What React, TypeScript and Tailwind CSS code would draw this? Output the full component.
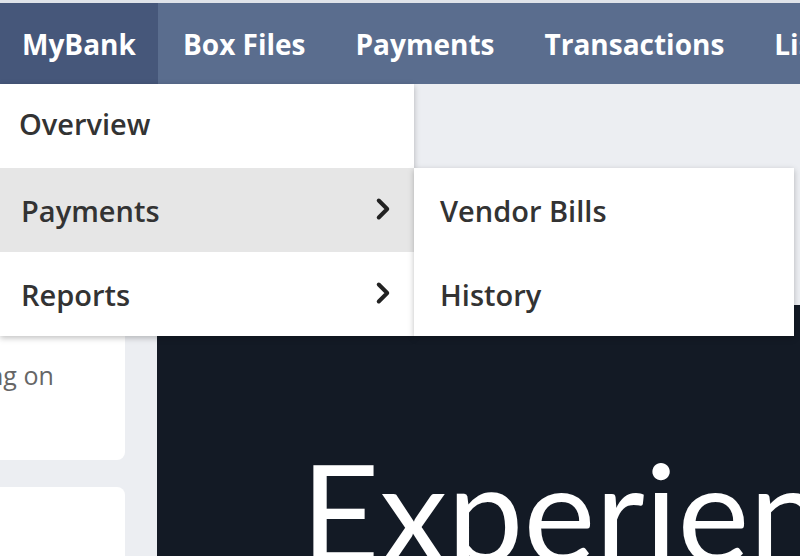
import { ChevronRight } from 'lucide-react';

const NAV_ITEMS = ['MyBank', 'Box Files', 'Payments', 'Transactions', 'Lists'];

interface MenuRowProps {
  label: string;
  active?: boolean;
  hasChildren?: boolean;
  indent?: string;
  raise?: boolean;
}

function MenuRow({ label, active, hasChildren, indent = 'pl-[21px]', raise }: MenuRowProps) {
  return (
    <div
      className={[
        'flex h-[84px] items-center justify-between pr-[14px] text-[29px] font-semibold text-[#333333]',
        indent,
        active ? 'bg-[#e6e6e6]' : 'bg-white',
      ].join(' ')}
    >
      <span className={raise ? '-mt-[4px]' : 'mt-[1px]'}>{label}</span>
      {hasChildren && (
        <ChevronRight className="-mt-[2px] h-[34px] w-[34px] text-[#222]" strokeWidth={2.8} />
      )}
    </div>
  );
}

export default function App() {
  return (
    <div
      className="relative h-[556px] w-[800px] overflow-hidden bg-[#eceef2]"
      style={{ fontFamily: '"Open Sans", "Liberation Sans", sans-serif' }}
    >
      <div className="h-[3px] bg-[#dfe3e9]" />
      <nav className="flex h-[81px] items-stretch overflow-hidden whitespace-nowrap bg-[#5a6d8e]">
        {NAV_ITEMS.map((item, i) => (
          <div
            key={item}
            className={[
              'flex shrink-0 items-center text-[28px] font-bold text-white',
              i === 0 ? 'w-[158px] bg-[#46577a] pl-[22px]' : 'px-[25px]',
            ].join(' ')}
          >
            <span className="mt-[1px]">{item}</span>
          </div>
        ))}
      </nav>

      {/* page body */}
      <div className="flex pt-[221px]">
        <div className="flex w-[125px] shrink-0 flex-col gap-[27px] overflow-hidden">
          <div className="h-[155px] rounded-r-[8px] bg-white">
            <p className="-ml-[12px] mt-[52px] text-[25px] text-[#666]">ng on</p>
          </div>
          <div className="h-[80px] rounded-tr-[8px] bg-white" />
        </div>
        <div className="ml-[32px] h-[260px] flex-1 overflow-hidden bg-[#131a25]">
          <p
            className="ml-[144px] mt-[138px] whitespace-nowrap text-[136px] font-normal leading-none text-white"
            style={{ fontFamily: 'Lato, "Open Sans", sans-serif' }}
          >
            Experience
          </p>
        </div>
      </div>

      {/* dropdown menu */}
      <div className="absolute left-0 top-[84px] w-[414px] shadow-[0_2px_6px_rgba(0,0,0,0.25)]">
        <MenuRow label="Overview" indent="pl-[19px]" raise />
        <div className="h-px bg-[#d6d6d6]" />
        <div className="-mt-px">
          <MenuRow label="Payments" active hasChildren />
        </div>
        <MenuRow label="Reports" hasChildren />
      </div>

      {/* submenu */}
      <div className="absolute left-[414px] top-[168px] w-[380px] bg-white shadow-[0_2px_6px_rgba(0,0,0,0.25)]">
        <MenuRow label="Vendor Bills" indent="pl-[26px]" />
        <MenuRow label="History" indent="pl-[26px]" />
      </div>
    </div>
  );
}
